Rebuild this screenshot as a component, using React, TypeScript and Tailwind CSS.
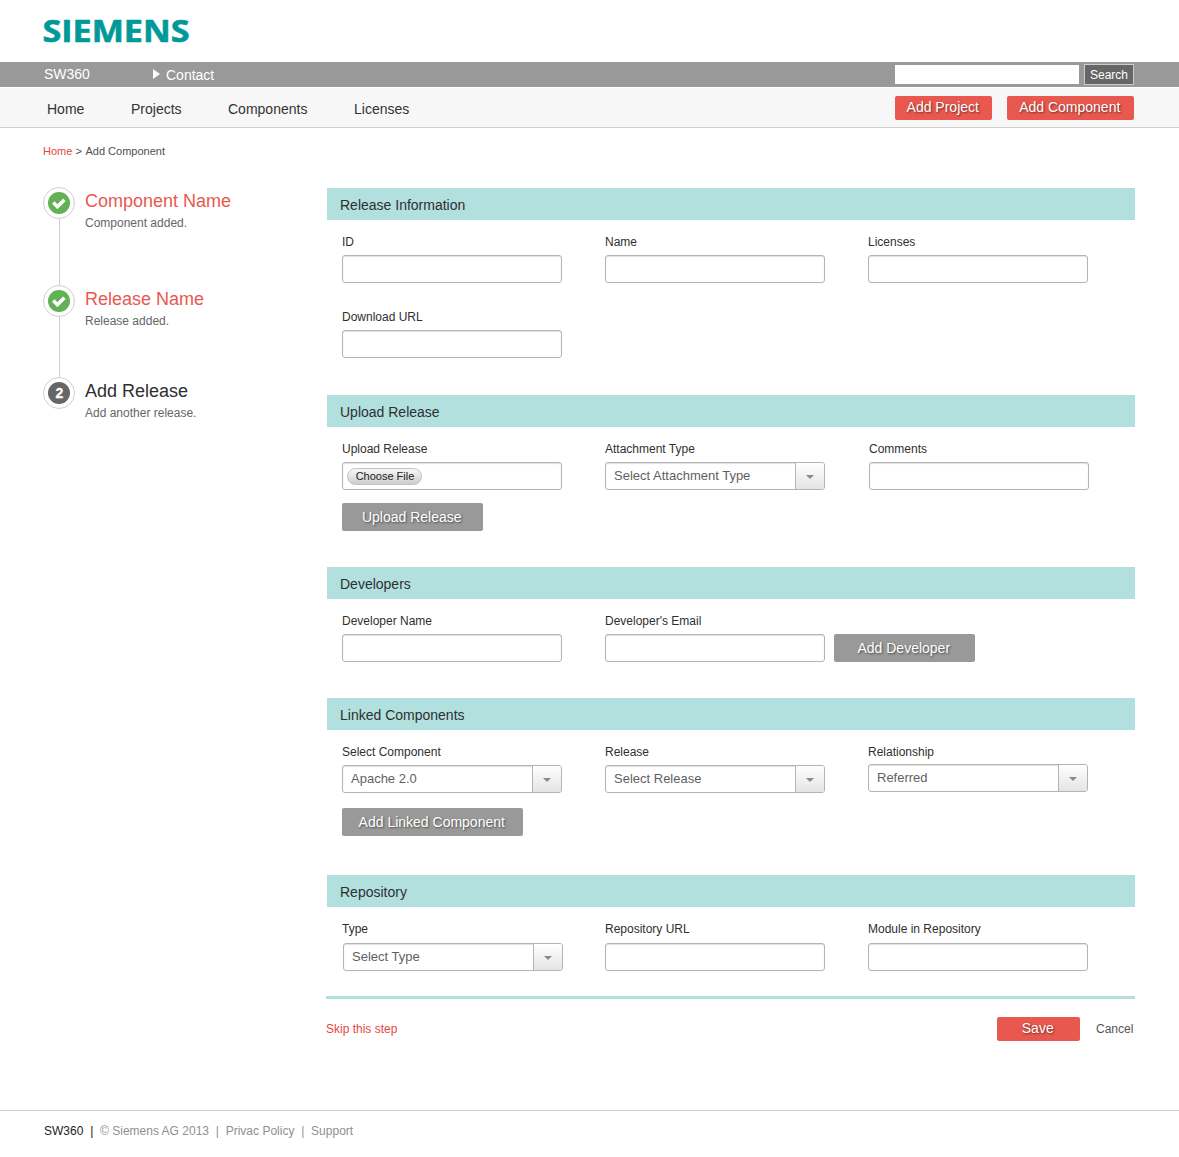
import React from "react";

const shadow = "[text-shadow:1px_1px_2px_rgba(0,0,0,0.5)]";

function Label({ children }: { children: React.ReactNode }) {
  return <div className="h-4 whitespace-nowrap text-xs leading-4 text-[#2f2f2f]">{children}</div>;
}

const box =
  "h-7 w-[220px] rounded-[3px] border border-[#b4b4b4] bg-white shadow-[inset_0_1px_1px_rgba(0,0,0,0.12)]";

function TextField({ label, className = "mt-[5px]" }: { label: string; className?: string }) {
  return (
    <label className="block">
      <Label>{label}</Label>
      <input className={`block outline-none ${box} ${className}`} />
    </label>
  );
}

function SelectField({
  label,
  value,
  className = "mt-[5px]",
}: {
  label: string;
  value: string;
  className?: string;
}) {
  return (
    <div>
      <Label>{label}</Label>
      <div className={`flex overflow-hidden ${box} ${className}`}>
        <span className="flex-1 pl-2 text-[13px] leading-[25px] text-[#5f5f5f]">{value}</span>
        <span className="flex w-[29px] items-center justify-center border-l border-[#b4b4b4] bg-linear-to-b from-white to-[#e4e4e4] pt-px">
          <svg width="8" height="4" viewBox="0 0 8 4">
            <path d="M0 0H8L4 4Z" fill="#8a8a8a" />
          </svg>
        </span>
      </div>
    </div>
  );
}

function Section({
  title,
  className,
  children,
}: {
  title: string;
  className: string;
  children: React.ReactNode;
}) {
  return (
    <section className={className}>
      <h2 className="h-8 bg-[#b1e0df] pl-[13px] text-sm leading-[34px] text-[#2f2f2f]">{title}</h2>
      <div className="pl-[15px] pt-[14px]">{children}</div>
    </section>
  );
}

function Row({ children }: { children: React.ReactNode }) {
  return <div className="grid grid-cols-[220px_220px_220px] gap-x-[43px]">{children}</div>;
}

function GrayButton({ className, children }: { className: string; children: React.ReactNode }) {
  return (
    <button
      className={`block h-7 whitespace-nowrap rounded-[2px] bg-[#999] pr-[1.5px] text-center text-sm leading-7 text-white ${shadow} ${className}`}
    >
      {children}
    </button>
  );
}

function RedButton({ className, children }: { className: string; children: React.ReactNode }) {
  return (
    <button
      className={`block h-6 whitespace-nowrap rounded-[2px] bg-[#e8584f] pr-[1.5px] text-center text-sm leading-[22px] text-white ${shadow} ${className}`}
    >
      <span className="block h-6">{children}</span>
    </button>
  );
}

function Step({
  title,
  note,
  number,
  className = "",
  last = false,
}: {
  title: string;
  note: string;
  number?: string;
  className?: string;
  last?: boolean;
}) {
  return (
    <li className={`flex ${className}`}>
      <div className="flex w-8 flex-col items-center">
        <svg width="32" height="32" viewBox="0 0 32 32" className="shrink-0">
          <circle cx="16" cy="16" r="15.5" fill="#fff" stroke="#cfcfcf" />
          <circle cx="16" cy="16" r="11" fill={number ? "#666" : "#62b155"} />
          {number ? (
            <text
              x="16.5"
              y="21"
              textAnchor="middle"
              fill="#fff"
              fontSize="14"
              fontWeight="700"
              stroke="#fff"
              strokeWidth="0.3"
              fontFamily="Liberation Sans"
            >
              {number}
            </text>
          ) : (
            <path d="M10.3 15.6L14.4 19.7L21.4 12.7" fill="none" stroke="#fff" strokeWidth="3.6" />
          )}
        </svg>
        {!last && <div className="w-px flex-1 bg-[#cfcfcf]" />}
      </div>
      <div className="pl-[10px]">
        <div className={`pt-[3px] text-lg leading-[22px] ${number ? "text-[#2f2f2f]" : "text-[#e8584f]"}`}>
          {title}
        </div>
        <div className="pt-[3px] text-xs leading-4 text-[#666]">{note}</div>
      </div>
    </li>
  );
}

export default function App() {
  return (
    <div className="h-[1157px] w-[1179px] overflow-hidden bg-white font-['Liberation_Sans',Arial,sans-serif]">
      <header>
        <div className="h-[62px] pl-10 pt-[10px]">
          <svg width="160" height="44" viewBox="0 0 160 44" className="overflow-visible">
            <text
              x="2.5"
              y="32"
              fill="#009999"
              stroke="#009999"
              strokeWidth="0.6"
              fontSize="30.5"
              fontWeight="700"
              fontFamily="Open Sans, Noto Sans, sans-serif"
              textLength="147"
              lengthAdjust="spacingAndGlyphs"
            >
              SIEMENS
            </text>
          </svg>
        </div>
        <div className="flex h-[25px] bg-[#999] pl-11 pr-[45px] text-sm text-white">
          <span className="w-[109px] leading-[25px]">SW360</span>
          <span className="flex leading-[27px]">
            <svg width="7" height="10" viewBox="0 0 7 10" className="mr-[6px] mt-[7px]">
              <path d="M0 0L7 5L0 10Z" fill="#fff" />
            </svg>
            Contact
          </span>
          <input className="ml-auto mt-[3px] h-[19px] w-[184px] bg-white outline-none" />
          <button className="ml-[5px] mt-[2px] h-[21px] w-[50px] border border-[#ccc] bg-[#666] text-xs leading-[19px]">
            <span className="block pt-px leading-[18px]">Search</span>
          </button>
        </div>
        <nav className="mt-px flex h-10 border-b border-[#cfcfcf] bg-[#f7f7f7] pl-[47px] pr-[45px] text-sm leading-[42px] text-[#333]">
          <a className="w-[84px]">Home</a>
          <a className="w-[97px]">Projects</a>
          <a className="w-[126px]">Components</a>
          <a>Licenses</a>
          <RedButton className="ml-auto mt-2 w-[97px]">Add Project</RedButton>
          <RedButton className="ml-[15px] mt-2 w-[127px]">Add Component</RedButton>
        </nav>
      </header>

      <div className="h-[60px] pl-[43px] pt-[15px] text-[11px] leading-4 text-[#4f4f4f]">
        <span className="text-[#e8483f]">Home</span> &gt; <span className="pl-[0.6px]">Add Component</span>
      </div>

      <main className="flex h-[922px] pl-[43px]">
        <ol className="-mt-px w-[283px]">
          <Step title="Component Name" note="Component added." className="h-[98px]" />
          <Step title="Release Name" note="Release added." className="h-[92px]" />
          <Step title="Add Release" note="Add another release." number="2" last />
        </ol>

        <form className="w-[809px]">
          <div className="pl-px">
            <Section title="Release Information" className="h-[207px]">
              <Row>
                <TextField label="ID" />
                <TextField label="Name" />
                <TextField label="Licenses" />
              </Row>
              <div className="mt-[26px]">
                <TextField label="Download URL" />
              </div>
            </Section>

            <Section title="Upload Release" className="h-[172px]">
              <Row>
                <div>
                  <Label>Upload Release</Label>
                  <div className={`mt-[5px] pl-1 pt-[5px] ${box}`}>
                    <button
                      type="button"
                      className="block h-[17px] w-[75px] rounded-full border border-[#c2c2c2] bg-linear-to-b from-[#f8f8f8] to-[#cdcdcd] pl-px text-[11px] leading-[15px] text-[#222]"
                    >
                      Choose File
                    </button>
                  </div>
                </div>
                <SelectField label="Attachment Type" value="Select Attachment Type" />
                <div className="pl-px">
                  <TextField label="Comments" />
                </div>
              </Row>
              <GrayButton className="mt-[13px] w-[141px]">Upload Release</GrayButton>
            </Section>

            <Section title="Developers" className="h-[131px]">
              <div className="flex items-end">
                <TextField label="Developer Name" />
                <div className="ml-[43px]">
                  <TextField label="Developer's Email" />
                </div>
                <GrayButton className="ml-[9px] w-[141px]">Add Developer</GrayButton>
              </div>
            </Section>

            <Section title="Linked Components" className="h-[177px]">
              <Row>
                <SelectField label="Select Component" value="Apache 2.0" />
                <SelectField label="Release" value="Select Release" />
                <SelectField label="Relationship" value="Referred" className="mt-1" />
              </Row>
              <GrayButton className="mt-[15px] w-[181px]">Add Linked Component</GrayButton>
            </Section>

            <Section title="Repository" className="h-[121px]">
              <Row>
                <SelectField label="Type" value="Select Type" className="ml-px mt-[6px]" />
                <TextField label="Repository URL" className="mt-[6px]" />
                <TextField label="Module in Repository" className="mt-[6px]" />
              </Row>
            </Section>
          </div>

          <div className="flex border-t-[3px] border-[#b1e0df] pt-[18px] text-xs">
            <a className="pt-1 leading-4 text-[#e8483f]">Skip this step</a>
            <RedButton className="ml-auto w-[83px]">Save</RedButton>
            <a className="ml-4 w-[39px] pt-1 leading-4 text-[#555]">Cancel</a>
          </div>
        </form>
      </main>

      <footer className="flex gap-[6.8px] border-t border-[#cfcfcf] pl-11 pt-3 text-xs leading-4 text-[#8f8f8f]">
        <span className="text-[#222]">SW360</span>
        <span className="text-[#222]">|</span>
        <span>© Siemens AG 2013</span>
        <span>|</span>
        <span>Privac Policy</span>
        <span>|</span>
        <span>Support</span>
      </footer>
    </div>
  );
}
